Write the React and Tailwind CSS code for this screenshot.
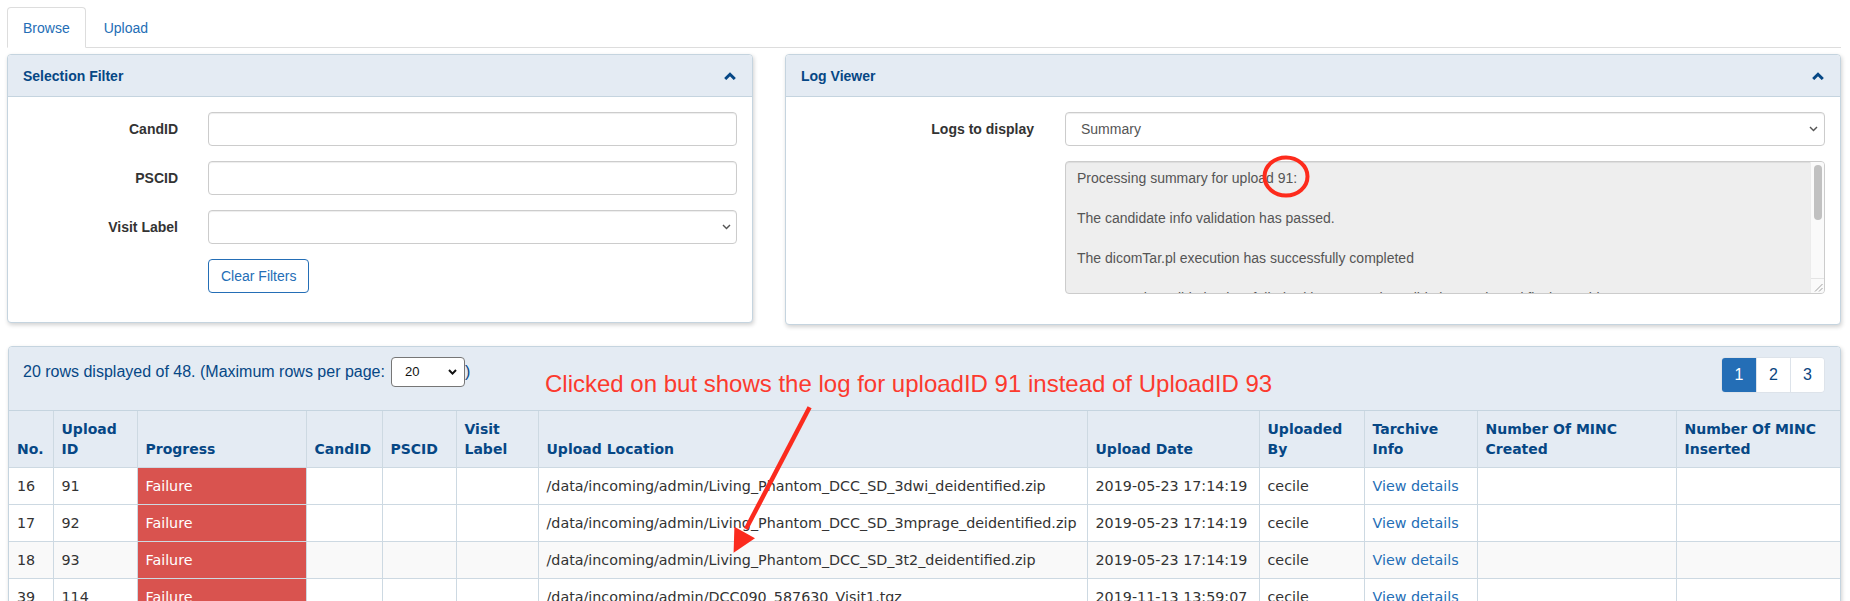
import React from "react";

function ChevronUp() {
  return (
    <svg width="12" height="8" viewBox="0 0 12 8" className="block">
      <polyline points="1.2,7 6,2.3 10.8,7" fill="none" stroke="#064785" strokeWidth="3" strokeLinejoin="miter" />
    </svg>
  );
}

function SelectChevron({ color = "#555", bold = false }) {
  return (
    <svg width="9" height="6" viewBox="0 0 9 6" className="block">
      <polyline points="1,1 4.5,4.6 8,1" fill="none" stroke={color} strokeWidth={bold ? 2 : 1.4} />
    </svg>
  );
}

function Panel({ title, className = "", children }) {
  return (
    <div className={"rounded-[4px] border border-[#c5d4df] bg-white shadow-[1px_2px_4px_rgba(0,0,0,0.18)] " + className}>
      <div className="flex h-[42px] items-center justify-between rounded-t-[4px] border-b border-[#c5d4df] bg-[#e4ebf3] pl-[15px] pr-[16px]">
        <span className="font-bold text-[#064785]">{title}</span>
        <ChevronUp />
      </div>
      {children}
    </div>
  );
}

const inputCls =
  "h-[34px] w-full rounded-[4px] border border-[#ccc] bg-white shadow-[inset_0_1px_1px_rgba(0,0,0,0.075)]";

const rows = [
  { no: 16, id: 91, loc: "/data/incoming/admin/Living_Phantom_DCC_SD_3dwi_deidentified.zip", date: "2019-05-23 17:14:19", bg: "bg-white" },
  { no: 17, id: 92, loc: "/data/incoming/admin/Living_Phantom_DCC_SD_3mprage_deidentified.zip", date: "2019-05-23 17:14:19", bg: "bg-white" },
  { no: 18, id: 93, loc: "/data/incoming/admin/Living_Phantom_DCC_SD_3t2_deidentified.zip", date: "2019-05-23 17:14:19", bg: "bg-[#f9f9f9]" },
  { no: 39, id: 114, loc: "/data/incoming/admin/DCC090_587630_Visit1.tgz", date: "2019-11-13 13:59:07", bg: "bg-white" },
  { no: 40, id: 115, loc: "/data/incoming/admin/DCC090_587630_Visit2.tgz", date: "2019-11-13 14:02:11", bg: "bg-[#f9f9f9]" },
];

const th = "border border-[#cdd9e2] bg-[#e4ebf3] px-[8px] py-[8px] text-left align-bottom font-bold text-[14px] leading-[20px] text-[#064785] whitespace-nowrap";
const td = "border border-[#cdd9e2] px-[8px] py-[8px] text-[14.3px] leading-[20px] whitespace-nowrap";

export default function App() {
  return (
    <div className="relative h-[601px] w-[1850px] overflow-hidden bg-white pl-[7px] pr-[9px] pt-[7px] font-['Liberation_Sans',Arial,sans-serif] text-[14px] leading-[20px] text-[#333]">
      {/* Tabs */}
      <div className="flex h-[41px] border-b border-[#ddd]">
        <div className="-mb-px h-[41px] rounded-t-[4px] border border-[#ddd] border-b-white bg-white px-[15px] py-[10px] text-[#246eb6]">
          Browse
        </div>
        <div className="ml-[2px] border border-transparent px-[15px] py-[10px] text-[#246eb6]">Upload</div>
      </div>

      {/* Top panels */}
      <div className="mt-[6px] flex items-start gap-[32px]">
        <Panel title="Selection Filter" className="w-[746px] shrink-0">
          <div className="grid grid-cols-[155px_1fr] items-center gap-x-[30px] gap-y-[15px] px-[15px] pb-[29px] pt-[15px]">
            <label className="text-right font-bold">CandID</label>
            <div className={inputCls} />
            <label className="text-right font-bold">PSCID</label>
            <div className={inputCls} />
            <label className="text-right font-bold">Visit Label</label>
            <div className={"relative flex items-center justify-end pr-[5px] " + inputCls}>
              <SelectChevron />
            </div>
            <div className="col-start-2">
              <button className="h-[34px] rounded-[4px] border border-[#246eb6] bg-white px-[12px] text-[#246eb6]">
                Clear Filters
              </button>
            </div>
          </div>
        </Panel>

        <Panel title="Log Viewer" className="flex-1">
          <div className="grid grid-cols-[233px_1fr] items-center gap-x-[31px] gap-y-[15px] px-[15px] pb-[30px] pt-[15px]">
            <label className="text-right font-bold">Logs to display</label>
            <div className={"flex items-center justify-between pl-[15px] pr-[6px] text-[#555] " + inputCls}>
              <span>Summary</span>
              <SelectChevron />
            </div>
            <div className="col-start-2 flex h-[133px] overflow-hidden rounded-[4px] border border-[#ccc] bg-[#eee] shadow-[inset_0_1px_1px_rgba(0,0,0,0.075)]">
              <div className="flex-1 whitespace-pre pl-[11px] pt-[6px] leading-[20px] text-[#555]">
                {"Processing summary for upload 91:\n\nThe candidate info validation has passed.\n\nThe dicomTar.pl execution has successfully completed\n\nERROR: The validation has failed. Either re-run the validation again and fix the problem. Or re-run\n"}
              </div>
              <div className="flex w-[14px] flex-col border-l border-[#ececec] bg-[#fafafa]">
                <div className="mx-auto mt-[3px] h-[55px] w-[8px] rounded-full bg-[#c1c1c1]" />
                <div className="flex-1" />
                <div className="flex h-[15px] items-end justify-end border-t border-[#e4e4e4] pb-[1px] pr-[1px]">
                  <svg width="9" height="9" viewBox="0 0 9 9">
                    <line x1="1" y1="8.5" x2="8.5" y2="1" stroke="#888" strokeWidth="0.8" />
                    <line x1="5" y1="8.5" x2="8.5" y2="5" stroke="#888" strokeWidth="0.8" />
                  </svg>
                </div>
              </div>
            </div>
          </div>
        </Panel>
      </div>

      {/* Table panel */}
      <div className="ml-[1px] mt-[21px] overflow-hidden rounded-[4px] border border-[#c5d4df] bg-white shadow-[1px_2px_4px_rgba(0,0,0,0.18)]">
        <div className="flex h-[64px] items-start justify-between border-b border-[#c5d4df] bg-[#e4ebf3] pl-[14px] pr-[15px] pt-[10px]">
          <div className="flex h-[30px] items-center text-[16px] text-[#064785]">
            <span>20 rows displayed of 48. (Maximum rows per page:</span>
            <div className="ml-[6px] flex h-[30px] w-[74px] items-center justify-between rounded-[4px] border border-[#767676] bg-white pl-[13px] pr-[7px] text-[13px] text-[#111]">
              <span>20</span>
              <SelectChevron color="#111" bold />
            </div>
            <span>)</span>
          </div>
          <div className="flex h-[36px] overflow-hidden rounded-[4px] border border-[#dde3ea] text-[16px] leading-[24px]">
            <div className="flex w-[34px] items-center justify-center bg-[#246eb6] text-white">1</div>
            <div className="flex w-[34px] items-center justify-center border-l border-[#dde3ea] bg-white text-[#0b457f]">2</div>
            <div className="flex w-[34px] items-center justify-center border-l border-[#dde3ea] bg-white text-[#0b457f]">3</div>
          </div>
        </div>

        <table className="w-full table-fixed border-collapse border-hidden font-['DejaVu_Sans',Verdana,sans-serif] text-[14px]">
          <colgroup>
            <col className="w-[44px]" />
            <col className="w-[84px]" />
            <col className="w-[169px]" />
            <col className="w-[76px]" />
            <col className="w-[74px]" />
            <col className="w-[82px]" />
            <col className="w-[549px]" />
            <col className="w-[172px]" />
            <col className="w-[105px]" />
            <col className="w-[113px]" />
            <col className="w-[199px]" />
            <col />
          </colgroup>
          <thead>
            <tr>
              <th className={th}>No.</th>
              <th className={th}>Upload<br />ID</th>
              <th className={th}>Progress</th>
              <th className={th}>CandID</th>
              <th className={th}>PSCID</th>
              <th className={th}>Visit<br />Label</th>
              <th className={th}>Upload Location</th>
              <th className={th}>Upload Date</th>
              <th className={th}>Uploaded<br />By</th>
              <th className={th}>Tarchive<br />Info</th>
              <th className={th}>Number Of MINC<br />Created</th>
              <th className={th}>Number Of MINC<br />Inserted</th>
            </tr>
          </thead>
          <tbody>
            {rows.map((r) => (
              <tr key={r.no} className={r.bg}>
                <td className={td}>{r.no}</td>
                <td className={td}>{r.id}</td>
                <td className={td + " bg-[#d9534f] text-white"}>Failure</td>
                <td className={td}></td>
                <td className={td}></td>
                <td className={td}></td>
                <td className={td}>{r.loc}</td>
                <td className={td}>{r.date}</td>
                <td className={td}>cecile</td>
                <td className={td + " text-[#246eb6]"}>View details</td>
                <td className={td}></td>
                <td className={td}></td>
              </tr>
            ))}
          </tbody>
        </table>
      </div>

      {/* Annotation overlay */}
      <div className="pointer-events-none absolute left-[545px] top-[372px] whitespace-nowrap text-[24px] leading-[24px] text-[#fc3a2e]">
        Clicked on but shows the log for uploadID 91 instead of UploadID 93
      </div>
      <svg className="pointer-events-none absolute left-0 top-0" width="1850" height="601" viewBox="0 0 1850 601">
        <ellipse cx="1286" cy="176.5" rx="21.5" ry="19" fill="none" stroke="#fd2b1c" strokeWidth="4" />
        <line x1="809.6" y1="407.3" x2="746" y2="529" stroke="#fb2b1e" strokeWidth="4.5" />
        <polygon points="733.6,552.7 734.4,526.7 755,538.3" fill="#fb2b1e" />
      </svg>
    </div>
  );
}
